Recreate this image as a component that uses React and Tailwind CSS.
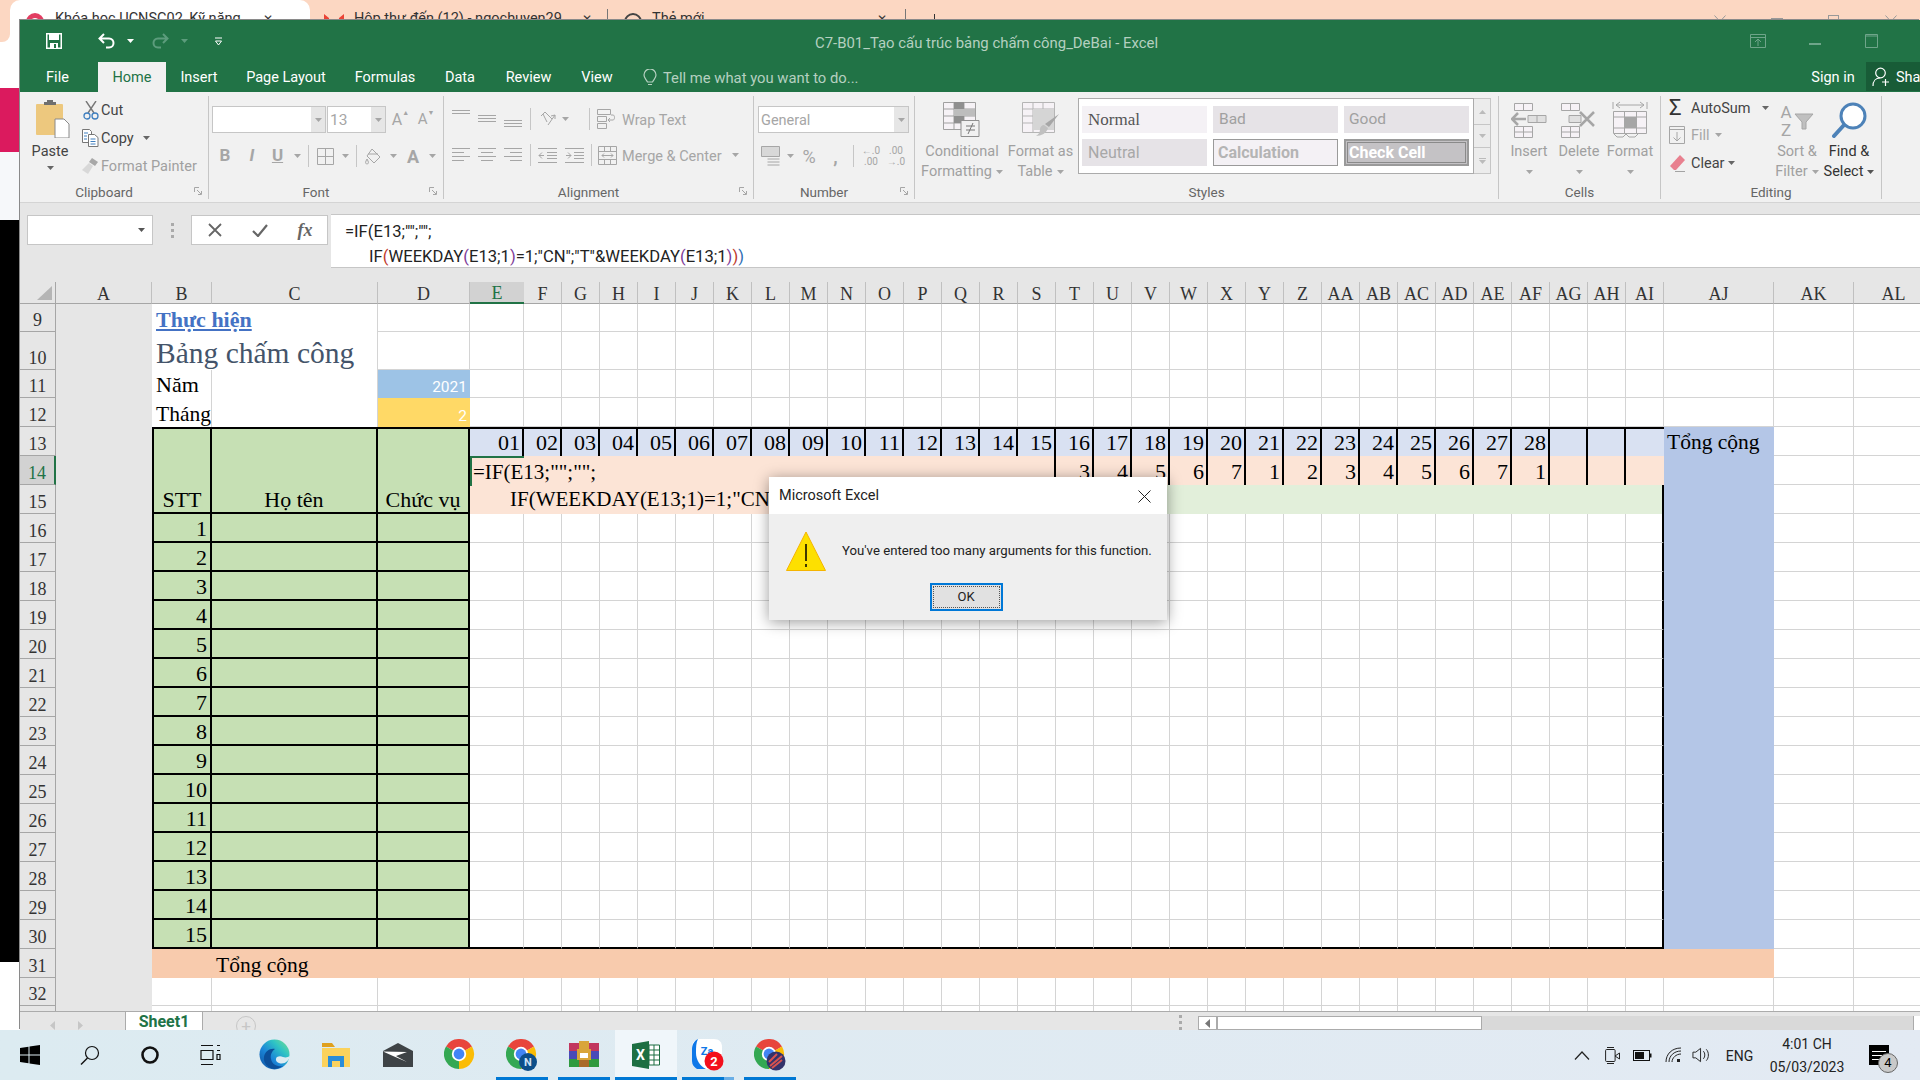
import React from "react";

const P = ({ w, h, d, s = "#a6a6a6", sw = 1, f = "none" }) => (
  <svg width={w} height={h} viewBox={`0 0 ${w} ${h}`} className="shrink-0">
    <path d={d} fill={f} stroke={s} strokeWidth={sw} />
  </svg>
);
const Caret = ({ c = "#a6a6a6" }) => (
  <svg width="7" height="4" viewBox="0 0 7 4" className="shrink-0"><path d="M0 0h7L3.5 4z" fill={c} /></svg>
);
const C = ({ className = "", children }) => (
  <div className={"flex items-center justify-center shrink-0 " + className}>{children}</div>
);
const Sep = () => <div className="w-px h-[22px] bg-[#c6c6c6]" />;
const Launcher = () => (
  <svg width="8" height="8" viewBox="0 0 8 8" className="absolute right-[6px] top-[3px]">
    <path d="M.5 5V.5H5M3 3l4 4M4 7.5h3.5V4" fill="none" stroke="#a6a6a6" />
  </svg>
);
const Group = ({ className = "", label, launcher, children }) => (
  <div className={"mt-[4px] h-[103px] border-r border-[#c6c6c6] flex flex-col shrink-0 " + className}>
    <div className="h-[90px] flex">{children}</div>
    <div className={"relative h-[15px] pt-[1px] leading-[14px] text-center text-[13.5px] text-[#666] " + (launcher ? "pr-[20px]" : "")}>
      {label}
      {launcher && <Launcher />}
    </div>
  </div>
);
const Big = ({ className = "", icon, a, b, caret, color = "text-[#a0a0a0]", carC }) => (
  <div className={"flex flex-col items-center pt-[5px] shrink-0 text-[14.5px] leading-[20px] " + color + " " + className}>
    <div className="h-[37px] flex items-center justify-center">{icon}</div>
    <div className="mt-[4px] whitespace-nowrap">{a}</div>
    <div className="whitespace-nowrap h-[20px] flex items-center gap-[4px]">
      {b}
      {caret && <Caret c={carC} />}
    </div>
  </div>
);

const grid = "border-r border-b border-[#d4d4d4]";
const range = (n) => Array.from({ length: n }, (_, i) => i);
const colNames = ["F","G","H","I","J","K","L","M","N","O","P","Q","R","S","T","U","V","W","X","Y","Z","AA","AB","AC","AD","AE","AF","AG","AH","AI"];
const w14 = { 15: 3, 16: 4, 17: 5, 18: 6, 19: 7, 20: 1, 21: 2, 22: 3, 23: 4, 24: 5, 25: 6, 26: 7, 27: 1 };
const Rh = ({ n, sel }) => (
  <div className={"flex items-end justify-center leading-[22px] text-[18px] border-b " + (sel ? "bg-[#d2d2d2] text-[#217346] border-r-2 border-r-[#217346] border-b-[#a6a6a6]" : "bg-[#e6e6e6] text-[#333] border-r border-[#a6a6a6]")}>{n}</div>
);

function Sheet() {
  const cells = [];
  const push = (el) => cells.push(React.cloneElement(el, { key: cells.length }));
  push(
    <div className="bg-[#e6e6e6] border-r border-b border-[#a6a6a6] flex items-end justify-end pr-[3px] pb-[3px]">
      <svg width="15" height="14" viewBox="0 0 15 14"><path d="M15 0v14H0z" fill="#b5b5b5" /></svg>
    </div>
  );
  const hd = "flex items-center justify-center pt-[2px] text-[18px] leading-none text-[#333] bg-[#e6e6e6] border-r border-b border-r-[#c0c0c0] border-b-[#a6a6a6]";
  ["A", "B", "C", "D"].forEach((c) => push(<div className={hd}>{c}</div>));
  push(<div className="flex items-center justify-center pt-[2px] text-[18px] leading-none text-[#217346] bg-[#d2d2d2] border-b-2 border-[#217346]">E</div>);
  [...colNames, "AJ", "AK", "AL"].forEach((c) => push(<div className={hd}>{c}</div>));

  // rows 9-12
  push(<Rh n={9} />);
  push(<div className="row-span-25 bg-[#e6e6e6]" />);
  push(
    <div className="col-span-2 border-r border-[#d4d4d4] flex items-end pl-[4px] leading-[24px] text-[22px] font-bold text-[#4472c4] underline decoration-2 underline-offset-2 whitespace-nowrap">Thực hiện</div>
  );
  range(35).forEach(() => push(<div className={grid} />));
  push(<Rh n={10} />);
  push(<div className="col-span-2 border-r border-[#d4d4d4] flex items-end pl-[4px] leading-[34px] text-[29.5px] text-[#44546a] whitespace-nowrap">Bảng chấm công</div>);
  range(35).forEach(() => push(<div className={grid} />));
  push(<Rh n={11} />);
  push(<div className="border-r border-[#d4d4d4] flex items-end pl-[4px] leading-[26px] text-[22px] text-black">Năm</div>);
  push(<div className="border-r border-[#d4d4d4]" />);
  push(<div className="bg-[#9dc3e6] flex items-end justify-end pr-[3px] leading-[22px] text-[15.5px] text-white [font-family:Roboto,sans-serif]">2021</div>);
  range(34).forEach(() => push(<div className={grid} />));
  push(<Rh n={12} />);
  push(<div className="border-r border-[#d4d4d4] flex items-end pl-[4px] leading-[26px] text-[21.5px] text-black">Tháng</div>);
  push(<div className="border-r border-[#d4d4d4]" />);
  push(<div className="bg-[#ffd966] flex items-end justify-end pr-[3px] leading-[22px] text-[15.5px] text-white [font-family:Roboto,sans-serif]">2</div>);
  range(34).forEach(() => push(<div className={grid} />));

  // row 13
  push(<Rh n={13} />);
  const merged = "row-span-3 bg-[#c6e0b4] flex items-end justify-center leading-[24px] text-[22px] text-black whitespace-nowrap border-t-2 border-b-2 border-r-2 border-black";
  push(<div className={merged + " border-l-2"}>STT</div>);
  push(<div className={merged}>Họ tên</div>);
  push(<div className={merged}>Chức vụ</div>);
  range(31).forEach((i) =>
    push(
      <div className={"bg-[#d9e1f2] border-t-2 border-black flex items-end justify-end pr-[2px] leading-[26px] text-[22px] text-black " + (i < 30 ? "border-r-2" : "")}>
        {i < 28 ? String(i + 1).padStart(2, "0") : ""}
      </div>
    )
  );
  push(<div className="row-span-18 bg-[#b4c6e7] pl-[3px] pt-[2px] leading-[26px] text-[21.5px] text-black whitespace-nowrap">Tổng cộng</div>);
  push(<div className={grid} />);
  push(<div className={grid} />);

  // row 14
  push(<Rh n={14} sel />);
  push(
    <div className="col-span-15 relative bg-[#fce4d6] border-r-2 border-black">
      <div className="absolute left-0 top-0 right-0 h-[58px] z-10 bg-[#fce4d6] overflow-hidden pl-[3px] pt-[3px] leading-[27px] text-[21px] text-black whitespace-nowrap">
        <div className="absolute left-0 top-0 w-[54px] h-[2px] bg-[#217346]" />
        <div className="absolute left-0 top-0 w-[2px] h-[30px] bg-[#217346]" />
        <div>=IF(E13;"";"";</div>
        <div className="pl-[37px]">IF(WEEKDAY(E13;1)=1;"CN";"T"&amp;WEEKDAY(E13;1)))</div>
      </div>
    </div>
  );
  range(16).forEach((j) => {
    const i = j + 15;
    push(
      <div className={"bg-[#fce4d6] border-black flex items-end justify-end pr-[2px] leading-[26px] text-[22px] text-black " + (i < 30 ? "border-r-2" : "")}>
        {w14[i] ?? ""}
      </div>
    );
  });
  push(<div className={grid} />);
  push(<div className={grid} />);

  // row 15
  push(<Rh n={15} />);
  push(<div className="col-span-31 bg-[#e2efda] border-r-2 border-black" />);
  push(<div className={grid} />);
  push(<div className={grid} />);

  // rows 16-30
  range(15).forEach((k) => {
    push(<Rh n={16 + k} />);
    push(<div className="bg-[#c6e0b4] border-l-2 border-r-2 border-b-2 border-black flex items-end justify-end pr-[3px] leading-[24px] text-[22px] text-black">{k + 1}</div>);
    push(<div className="bg-[#c6e0b4] border-r-2 border-b-2 border-black" />);
    push(<div className="bg-[#c6e0b4] border-r-2 border-b-2 border-black" />);
    range(31).forEach((i) => {
      const bottom = k === 14 ? "border-b-2 border-b-black" : "border-b border-b-[#d4d4d4]";
      const right = i === 30 ? "border-r-2 border-r-black" : "border-r border-r-[#d4d4d4]";
      push(<div className={bottom + " " + right} />);
    });
    push(<div className={grid} />);
    push(<div className={grid} />);
  });

  // row 31
  push(<Rh n={31} />);
  push(<div className="col-span-35 bg-[#f8cbad] flex items-end pl-[64px] leading-[26px] text-[21.5px] text-black whitespace-nowrap">Tổng cộng</div>);
  push(<div className={grid} />);
  push(<div className={grid} />);
  // row 32
  push(<Rh n={32} />);
  range(37).forEach(() => push(<div className={grid} />));
  // row 33
  push(<div className="bg-[#e6e6e6] border-r border-[#a6a6a6]" />);
  range(37).forEach(() => push(<div className="border-r border-[#d4d4d4]" />));

  return (
    <div className="relative h-[729px] shrink-0 overflow-hidden grid grid-cols-[36px_96px_60px_166px_92px_54px_repeat(30,38px)_110px_80px_80px] grid-rows-[22px_28px_38px_28px_29px_29px_29px_29px_repeat(15,29px)_29px_28px_5px] bg-white [font-family:'Liberation_Serif',serif]">
      {cells}
    </div>
  );
}

const ChromeLogo = ({ badge }) => (
  <svg width="32" height="32" viewBox="0 0 32 32">
    <path d="M15 15L2 7.5A15 15 0 0 1 28 7.5Z" fill="#e8453c" />
    <path d="M15 15L28 7.5A15 15 0 0 1 15 30Z" fill="#fbbc05" />
    <path d="M15 15L15 30A15 15 0 0 1 2 7.5Z" fill="#34a853" />
    <circle cx="15" cy="15" r="7.2" fill="#fff" />
    <circle cx="15" cy="15" r="5.4" fill="#4285f4" />
    {badge}
  </svg>
);

const TBCell = ({ bar, active, light, children }) => (
  <div className={"w-[62px] h-full flex flex-col items-center shrink-0 " + (active ? "bg-[#f0f6fa]" : "")}>
    <div className="flex-1 flex items-center justify-center pt-[2px]">{children}</div>
    <div className={"h-[3px] flex " + (active ? "w-[62px] bg-[#0078d4]" : bar ? "w-[52px] bg-[#0078d4] justify-end" : "w-[52px]")}>
      {light && <div className="w-[10px] bg-[#6aaee6]" />}
    </div>
  </div>
);

function Taskbar() {
  return (
    <div className="h-[50px] shrink-0 flex items-stretch bg-gradient-to-r from-[#dcebf1] to-[#e3eaf3] [font-family:Roboto,sans-serif] text-[#222]">
      <C className="w-[60px]">
        <svg width="20" height="20" viewBox="0 0 20 20"><path d="M0 3l8.5-1.2v7.6H0zM9.5 1.6L20 0v9.4H9.5zM0 10.5h8.5v7.7L0 17zM9.5 10.5H20V20L9.5 18.4z" fill="#000" /></svg>
      </C>
      <C className="w-[60px]">
        <svg width="20" height="20" viewBox="0 0 20 20"><circle cx="12" cy="8" r="6.5" fill="none" stroke="#111" strokeWidth="1.2" /><path d="M7.5 13L1 19.5" stroke="#111" strokeWidth="1.4" /></svg>
      </C>
      <C className="w-[60px]">
        <svg width="20" height="20" viewBox="0 0 20 20"><circle cx="10" cy="10" r="7.5" fill="none" stroke="#111" strokeWidth="2.6" /></svg>
      </C>
      <C className="w-[60px]">
        <svg width="21" height="20" viewBox="0 0 21 20"><path d="M1 .5h12M1 19.5h12M1 5.5h12v9H1zM17 .5h3M17 5.5h3M17 9.5h3v5h-3z" fill="none" stroke="#111" strokeWidth="1.2" /></svg>
      </C>
      <div className="w-[3px] shrink-0" />
      <TBCell>
        <svg width="31" height="31" viewBox="0 0 31 31">
          <defs>
            <linearGradient id="ed" x1="1" y1="0" x2="0" y2="1"><stop offset="0" stopColor="#7fe08a" /><stop offset=".3" stopColor="#2fc4c4" /><stop offset=".6" stopColor="#1b86d8" /><stop offset="1" stopColor="#0d4f9e" /></linearGradient>
          </defs>
          <circle cx="15.5" cy="15.5" r="15" fill="url(#ed)" />
          <path d="M31 17c-1 5-6 9-11 7-3-1-4-4-2-6 2-1 4-1 6 0 3 1 5 0 7-1z" fill="#dcebf1" />
          <path d="M16 10c-5-1-10 2-11 8-1 5 3 11 10 12 3 0 6-1 9-3-5 1-11-1-12-7-1-4 1-8 4-10z" fill="#0b4f9a" />
        </svg>
      </TBCell>
      <TBCell>
        <svg width="28" height="24" viewBox="0 0 28 24">
          <path d="M0 5h28v19H0z" fill="#fbd25c" />
          <path d="M0 0h10l3 4H0z" fill="#dfa01e" />
          <path d="M6 13h16v11h-4v-6h-8v6H6z" fill="#2a8dd8" />
        </svg>
      </TBCell>
      <TBCell>
        <svg width="30" height="24" viewBox="0 0 30 24">
          <path d="M0 8L15 0l15 8v16H0z" fill="#3e4346" />
          <path d="M0 8.500l24 .5-11 4 11 6L10 13z" fill="#fff" />
        </svg>
      </TBCell>
      <TBCell><ChromeLogo /></TBCell>
      <TBCell bar>
        <ChromeLogo badge={<><circle cx="22" cy="23" r="9" fill="#0d4f8a" /><text x="22" y="27" fontSize="11" fontWeight="700" fill="#cfe3f5" textAnchor="middle">N</text></>} />
      </TBCell>
      <TBCell bar>
        <svg width="32" height="27" viewBox="0 0 32 27">
          <rect x="1" y="2" width="30" height="8" fill="#c2365e" />
          <rect x="1" y="10" width="30" height="8" fill="#4a4ab8" />
          <rect x="1" y="18" width="30" height="8" fill="#2f9a3f" />
          <path d="M11 0h10v8h2v11h-2v7H11v-7H9V8h2z" fill="#d9a53a" />
          <rect x="12" y="12" width="8" height="5" fill="#fff" />
          <path d="M11 19h10v7H11z" fill="#a86a28" />
        </svg>
      </TBCell>
      <TBCell bar active>
        <svg width="28" height="28" viewBox="0 0 28 28">
          <path d="M0 3l17-3v28L0 25z" fill="#1d6f42" />
          <path d="M17 4h10.500v20H17z" fill="#fff" stroke="#1d6f42" />
          <path d="M17 9h10.500M17 14h10.500M17 19h10.500M22 4v20" stroke="#1d6f42" />
          <text x="8.500" y="19" fontSize="14" fontWeight="700" fill="#fff" textAnchor="middle">X</text>
        </svg>
      </TBCell>
      <TBCell bar light>
        <svg width="34" height="32" viewBox="0 0 34 32">
          <path d="M9 0h14c5 0 8 3 8 8v14c0 5-3 8-8 8H9c-5 0-8-3-8-8V8c0-5 3-8 8-8z" fill="#fff" />
          <path d="M7 0C3 2 1 6 1 10v12c0 4 2 6 5 8l9 0C9 27 5 21 5 14 5 8 5 4 7 0z" fill="#0f78e8" />
          <text x="16" y="16" fontSize="11" fontWeight="700" fill="#0f78e8" textAnchor="middle">Za</text>
          <circle cx="23" cy="22" r="9.5" fill="#f30f1c" />
          <text x="23" y="27" fontSize="13" fontWeight="700" fill="#fff" textAnchor="middle">2</text>
        </svg>
      </TBCell>
      <TBCell bar>
        <ChromeLogo badge={<><circle cx="22" cy="22" r="9.500" fill="#33336b" /><path d="M16 27l12-10M18 29l10-8M15 23l8-8" stroke="#d9534f" strokeWidth="2" /></>} />
      </TBCell>
      <div className="ml-auto flex items-center pr-[8px] shrink-0">
        <C className="w-[30px]"><P w={16} h={9} d="M1 8.500L8 1l7 7.500" s="#222" sw={1.2} /></C>
        <C className="w-[31px]">
          <svg width="15" height="19" viewBox="0 0 15 19"><path d="M2 1.500h7M2 17.500h7" stroke="#222" /><rect x=".6" y="3.500" width="9.500" height="12" rx="1" fill="none" stroke="#222" /><path d="M10 10l4.500-3v6z" fill="none" stroke="#222" /></svg>
        </C>
        <C className="w-[28px]">
          <svg width="19" height="11" viewBox="0 0 19 11"><rect x=".5" y=".5" width="16" height="10" fill="none" stroke="#111" /><rect x="2" y="2" width="9" height="7" fill="#111" /><rect x="17" y="3.500" width="1.500" height="4" fill="#111" /></svg>
        </C>
        <C className="w-[36px]">
          <svg width="18" height="16" viewBox="0 0 18 16"><path d="M1 15C1 7 7 1 16 1M4 15c0-6 5-11 12-11M7 15c0-4 4-8 9-8" fill="none" stroke="#222" /><rect x="12" y="12" width="3" height="3" fill="#222" /></svg>
        </C>
        <C className="w-[19px]">
          <svg width="20" height="16" viewBox="0 0 20 16"><path d="M1 5h3l5-4v14l-5-4H1z M12 4c2 2 2 6 0 8M15 2c3 3 3 9 0 12" fill="none" stroke="#222" /></svg>
        </C>
        <C className="w-[57px] pt-[2px] text-[14px]">ENG</C>
        <div className="w-[78px] pt-[2px] flex flex-col items-center text-[14px] leading-[23px]">
          <div>4:01 CH</div>
          <div>05/03/2023</div>
        </div>
        <div className="w-[66px] flex justify-center">
          <div className="relative w-[20px] h-[20px] bg-black flex flex-col justify-center gap-[3px] px-[3px]">
            <div className="h-px bg-white" /><div className="h-px bg-white" /><div className="h-px bg-white" />
            <div className="absolute left-[9px] top-[8px] w-[20px] h-[20px] rounded-full bg-[#c9c9c9] border border-[#666] flex items-center justify-center text-[13px] text-black">4</div>
          </div>
        </div>
      </div>
    </div>
  );
}

function Ribbon() {
  const small = "pt-[2px] text-[14.5px] leading-none whitespace-nowrap";
  const small2 = "pt-[4px] text-[14.5px] leading-none whitespace-nowrap";
  const abox = "border border-[#c6c6c6]";
  return (
    <div className="h-[111px] shrink-0 flex bg-[#f1f1f1] border-b border-[#d4d4d4] text-[#444] text-[14.5px]">
      {/* Clipboard */}
      <Group className="w-[189px]" label="Clipboard" launcher>
        <div className="w-[60px] flex flex-col items-center pt-[4px]">
          <svg width="35" height="38" viewBox="0 0 35 38" className="ml-[4px]">
            <rect x="1" y="4" width="27" height="31" rx="1" fill="#edc87e" />
            <path d="M9 5V2h3V0h6v2h3v3z" fill="#6f6f6f" />
            <path d="M20 19h9l5 5v14H20z" fill="#fff" stroke="#8a8a8a" />
          </svg>
          <div className="mt-[5px] leading-[18px] text-[#444]">Paste</div>
          <div className="mt-[5px]"><Caret c="#666" /></div>
        </div>
        <div className="flex flex-col">
          <div className="h-[28px] flex items-center mt-0">
            <C className="w-[21px]">
              <svg width="16" height="19" viewBox="0 0 16 19"><path d="M3 0l8 12M13 0L5 12" stroke="#777" strokeWidth="1.4" /><circle cx="4" cy="15" r="3" fill="none" stroke="#3f7fbf" strokeWidth="1.3" /><circle cx="12" cy="15" r="3" fill="none" stroke="#3f7fbf" strokeWidth="1.3" /></svg>
            </C>
            <span className={small}>Cut</span>
          </div>
          <div className="h-[28px] flex items-center">
            <C className="w-[21px]">
              <svg width="17" height="18" viewBox="0 0 17 18"><path d="M.5.500h7l2 2v11h-9z" fill="#fff" stroke="#777" /><path d="M6.500 5.500h6l3.500 3v9H6.500z" fill="#fff" stroke="#777" /><path d="M2 4h4M2 7h3M2 10h3M8.500 10h5M8.500 12.500h5M8.500 15h5" stroke="#3f7fbf" /></svg>
            </C>
            <span className={small}>Copy</span>
            <span className="ml-[9px]"><Caret c="#666" /></span>
          </div>
          <div className="h-[28px] flex items-center text-[#a0a0a0]">
            <C className="w-[21px]">
              <svg width="17" height="16" viewBox="0 0 17 16"><path d="M10 0l6 4-3 4-6-4z" fill="#a8a8a8" /><path d="M7 5l4 3-5 8-6-4z" fill="#d8d8d8" /></svg>
            </C>
            <span className={small}>Format Painter</span>
          </div>
        </div>
      </Group>

      {/* Font */}
      <Group className="w-[235px]" label="Font" launcher>
        <div className="flex flex-col pt-[10px] text-[#a6a6a6]">
          <div className="h-[27px] flex items-stretch pl-[3px]">
            <div className={"w-[114px] flex bg-white " + abox}>
              <div className="flex-1" />
              <C className="w-[14px] bg-[#e6e6e6]"><Caret /></C>
            </div>
            <div className={"ml-[1px] w-[59px] flex bg-white " + abox}>
              <div className="flex-1 pl-[2px] pt-[2px] flex items-center text-[15.5px]">13</div>
              <C className="w-[14px] bg-[#e6e6e6]"><Caret /></C>
            </div>
            <C className="w-[27px] ml-[1px] text-[16px] relative">A<span className="text-[7px] mb-[12px]">▲</span></C>
            <C className="w-[24px] text-[15px] relative">A<span className="text-[7px] mb-[12px]">▼</span></C>
          </div>
          <div className="h-[26px] mt-[10px] flex items-center pl-[1px]">
            <C className="w-[30px] font-bold text-[17px]">B</C>
            <C className="w-[24px] italic font-bold text-[17px]">I</C>
            <C className="w-[27px] font-bold text-[17px] underline">U</C>
            <C className="w-[12px]"><Caret /></C>
            <C className="w-[10px]"><Sep /></C>
            <C className="w-[24px]"><P w={17} h={17} d="M.5.500h16v16H.500zM8.500.500v16M.5 8.500h16" /></C>
            <C className="w-[16px]"><Caret /></C>
            <C className="w-[6px]"><Sep /></C>
            <C className="w-[28px]"><P w={16} h={17} d="M7 1l8 8-6 6-7-7zM3 6h10M1 13c-1 2 0 3 1 3s2-1 1-3l-1-2z" /></C>
            <C className="w-[12px]"><Caret /></C>
            <C className="w-[28px] text-[18px] font-bold">A</C>
            <C className="w-[10px]"><Caret /></C>
          </div>
        </div>
      </Group>

      {/* Alignment */}
      <Group className="w-[310px]" label="Alignment" launcher>
        <div className="flex flex-col pt-[10px] text-[#a6a6a6]">
          <div className="h-[26px] flex items-center pl-[4px]">
            <C className="w-[26px]"><P w={18} h={18} d="M0 .5h18M0 3.500h18" /></C>
            <C className="w-[26px]"><P w={18} h={18} d="M0 5.500h18M0 8.500h18M0 11.500h18" /></C>
            <C className="w-[26px]"><P w={18} h={18} d="M0 10.500h18M0 13.500h18M0 16.500h18" /></C>
            <C className="w-[8px]"><Sep /></C>
            <C className="w-[27px]"><P w={18} h={18} d="M2 6l4-4 7 7M4 4l4 8M9 15L16 5M16 5l-4 1M16 5v4" /></C>
            <C className="w-[8px]"><Caret /></C>
            <C className="w-[21px] justify-end"><Sep /></C>
            <C className="w-[31px]"><P w={18} h={20} d="M.5.500h13v5H.500zM.5 7.500h9v5h-9zM.5 14.500h9v5h-9zM11 11h5c2 0 2-5 0-5h-2M13 9l-2 2 2 2" /></C>
            <span className={small2 + " ml-[1px]"}>Wrap Text</span>
          </div>
          <div className="h-[26px] mt-[10px] flex items-center pl-[4px]">
            <C className="w-[26px]"><P w={18} h={14} d="M0 .5h18M0 4.500h12M0 8.500h18M0 12.500h12" /></C>
            <C className="w-[26px]"><P w={18} h={14} d="M0 .5h18M3 4.500h12M0 8.500h18M3 12.500h12" /></C>
            <C className="w-[26px]"><P w={18} h={14} d="M0 .5h18M6 4.500h12M0 8.500h18M6 12.500h12" /></C>
            <C className="w-[8px]"><Sep /></C>
            <C className="w-[27px]"><P w={19} h={15} d="M0 .5h19M9 4.500h10M9 7.500h10M9 10.500h10M0 14.500h19M6 7.500H1M4 4.500l-3 3 3 3" /></C>
            <C className="w-[26px]"><P w={19} h={15} d="M0 .5h19M9 4.500h10M9 7.500h10M9 10.500h10M0 14.500h19M1 7.500h5M3 4.500l3 3-3 3" /></C>
            <C className="w-[4px]" />
            <C className="w-px"><Sep /></C>
            <C className="w-[30px]"><P w={19} h={19} d="M.5.500h18v18H.500zM.5 5.500h18M.5 13.500h18M6.500.500v5M12.500.500v5M6.500 13.500v5M12.500 13.500v5M4 9.500h11M6 7.500l-2 2 2 2M13 7.500l2 2-2 2" /></C>
            <span className={small2}>Merge &amp; Center</span>
            <span className="ml-[10px]"><Caret /></span>
          </div>
        </div>
      </Group>

      {/* Number */}
      <Group className="w-[161px]" label="Number" launcher>
        <div className="flex flex-col pt-[10px] text-[#a6a6a6]">
          <div className={"h-[27px] ml-[4px] w-[151px] flex bg-white " + abox}>
            <div className="flex-1 pl-[2px] pt-[2px] flex items-center text-[14.5px]">General</div>
            <C className="w-[14px] bg-[#e6e6e6]"><Caret /></C>
          </div>
          <div className="h-[26px] mt-[10px] flex items-center pl-[4px]">
            <C className="w-[26px]"><P w={20} h={20} d="M.5.500h18v10H.500zM6.500 13h12M6.500 16h12M6.500 19h12" f="#d8d8d8" /></C>
            <C className="w-[12px]"><Caret /></C>
            <C className="w-[26px] text-[18px]">%</C>
            <C className="w-[27px] text-[18px] font-bold">,</C>
            <C className="w-[9px]"><Sep /></C>
            <C className="w-[26px] flex-col text-[10px] leading-[11px]"><span>←.0</span><span>.00</span></C>
            <C className="w-[24px] flex-col text-[10px] leading-[11px]"><span>.00</span><span>→.0</span></C>
          </div>
        </div>
      </Group>

      {/* Styles */}
      <Group className="w-[584px]" label="Styles">
        <Big className="ml-[6px] w-[82px]" a="Conditional" b="Formatting" caret icon={
          <svg width="38" height="36" viewBox="0 0 38 36">
            <path d="M.5.500h32v27H.500zM.5 7h32M.5 14h32M.5 21h32M11 .5v27M21 .5v27" fill="#f6f2f6" stroke="#a0a0a0" />
            <path d="M11 0h10v7H11zM11 14h10v7H11z" fill="#8f8f8f" /><path d="M11 7h21v7H11z" fill="#bdbdbd" />
            <path d="M18 18.500h18v16H18z" fill="#f1f1f1" stroke="#8f8f8f" />
            <path d="M23 24h9M23 28h9M30 21l-5 11" stroke="#777" fill="none" />
          </svg>
        } />
        <Big className="w-[75px]" a="Format as" b="Table" caret icon={
          <svg width="38" height="36" viewBox="0 0 38 36">
            <path d="M.5.500h32v30H.500zM.5 7h32M.5 14h32M.5 21h32M11 .5v30M21 .5v30" fill="#f6f2f6" stroke="#b5b5b5" />
            <path d="M11 7h21v21H11z" fill="#d5d5d5" />
            <path d="M37 12L27 25l-4-3z" fill="#a6a6a6" /><path d="M22 23l4 3c-1 5-7 8-12 8 3-2 4-4 4-7 0-2 2-4 4-4z" fill="#c0c0c0" />
          </svg>
        } />
        <div className="mt-[2px] w-[396px] h-[76px] bg-white border border-[#ababab] pl-[3px] pt-[7px] grid grid-cols-[125px_125px_125px] grid-rows-[27px_27px] gap-[6px] shrink-0">
          <div className="bg-[#f4f1f5] flex items-center pl-[6px] text-[17px] text-[#555] [font-family:'Liberation_Serif',serif]">Normal</div>
          <div className="bg-[#e6e3e7] flex items-center pl-[6px] text-[15.5px] text-[#a0a0a0]">Bad</div>
          <div className="bg-[#e6e3e7] flex items-center pl-[5px] text-[15.5px] text-[#a0a0a0]">Good</div>
          <div className="bg-[#e6e3e7] flex items-center pl-[6px] text-[16px] text-[#a8a8a8]">Neutral</div>
          <div className="bg-[#f4f1f5] border border-[#9a9a9a] flex items-center pl-[4px] text-[16px] font-bold text-[#b4b4b4]">Calculation</div>
          <div className="bg-[#c4c2c5] border-2 border-[#9a9a9a] flex items-center pl-[3px] text-[16px] font-bold text-white outline outline-1 -outline-offset-4 outline-[#8a8a8a]">Check Cell</div>
        </div>
        <div className="mt-[2px] w-[17px] h-[76px] flex flex-col border border-l-0 border-[#c6c6c6] bg-[#ececec] shrink-0 text-[#aaa]">
          <C className="h-[26px] border-b border-[#c6c6c6]"><svg width="7" height="4" viewBox="0 0 7 4"><path d="M0 4h7L3.500 0z" fill="#bbb" /></svg></C>
          <C className="h-[23px] border-b border-[#c6c6c6]"><Caret c="#bbb" /></C>
          <C className="flex-1 flex-col gap-[1px]"><div className="w-[7px] h-px bg-[#bbb]" /><Caret c="#bbb" /></C>
        </div>
      </Group>

      {/* Cells */}
      <Group className="w-[162px]" label="Cells">
        <Big className="ml-[5px] w-[50px]" a="Insert" icon={
          <svg width="36" height="36" viewBox="0 0 36 36">
            <path d="M3.500 1.500h18v7h-18zM12.500 1.500v7M3.500 24.500h18v11h-18zM3.500 30h18M12.500 24.500v11" fill="#f6f2f6" stroke="#a6a6a6" />
            <path d="M17 13.500h18v7H17zM26 13.500v7" fill="#e0e0e0" stroke="#a6a6a6" />
            <path d="M15 17H2M7 11l-6 6 6 6" fill="none" stroke="#a6a6a6" strokeWidth="2.500" />
          </svg>
        } b={<Caret />} />
        <Big className="w-[50px]" a="Delete" icon={
          <svg width="36" height="36" viewBox="0 0 36 36">
            <path d="M.5 1.500h18v7H.500zM9.500 1.500v7M.5 24.500h18v11H.500zM.5 30h18M9.500 24.500v11" fill="#f6f2f6" stroke="#a6a6a6" />
            <path d="M8 13.500h12v7H8z" fill="#e0e0e0" stroke="#a6a6a6" />
            <path d="M19 10l14 14M33 10L19 24" stroke="#a6a6a6" strokeWidth="2.500" />
          </svg>
        } b={<Caret />} />
        <Big className="w-[52px]" a="Format" icon={
          <svg width="36" height="37" viewBox="0 0 36 37">
            <path d="M1 1v7M35 1v7M4 4h28M8 1L4 4l4 3M28 1l4 3-4 3" fill="none" stroke="#a6a6a6" />
            <path d="M1.500 10.500h33v22h-33zM1.500 16h33M1.500 27h33M12.500 10.500v22M24.500 10.500v22" fill="#f6f2f6" stroke="#a6a6a6" />
            <path d="M12.500 16h12v11h-12z" fill="#a6a6a6" />
            <path d="M2 33l3 3h6l3-3M14 33l3 3h6l3-3" fill="none" stroke="#a6a6a6" />
          </svg>
        } b={<Caret />} />
      </Group>

      {/* Editing */}
      <Group className="w-[221px]" label="Editing">
        <div className="ml-[8px] w-[102px] flex flex-col shrink-0">
          <div className="h-[24px] flex items-center">
            <C className="w-[22px] justify-start text-[22px] leading-none text-[#333]">Σ</C>
            <span className={small}>AutoSum</span>
            <span className="ml-[11px]"><Caret c="#666" /></span>
          </div>
          <div className="h-[30px] flex items-center text-[#a6a6a6]">
            <C className="w-[22px] justify-start"><P w={16} h={18} d="M.5.500h15v17H.500zM.5 3.500h15M8 6v9M4.500 11.500L8 15l3.500-3.500" /></C>
            <span className={small}>Fill</span>
            <span className="ml-[5px]"><Caret /></span>
          </div>
          <div className="h-[26px] flex items-center">
            <C className="w-[22px] justify-start">
              <svg width="17" height="17" viewBox="0 0 17 17"><path d="M11 0l5 5-9 10H5l-4-4z" fill="#e8808f" /><path d="M6 17h10" stroke="#555" /></svg>
            </C>
            <span className={small}>Clear</span>
            <span className="ml-[4px]"><Caret c="#666" /></span>
          </div>
        </div>
        <Big className="w-[52px]" a="Sort &" b="Filter" caret icon={
          <svg width="36" height="34" viewBox="0 0 36 34">
            <text x="7" y="15" fontSize="17" fill="#a6a6a6" textAnchor="middle" fontFamily="Roboto,sans-serif">A</text>
            <text x="7" y="33" fontSize="17" fill="#a6a6a6" textAnchor="middle" fontFamily="Roboto,sans-serif">Z</text>
            <path d="M16 11h18l-7 8v7h-4v-7z" fill="#c0c0c0" stroke="#a6a6a6" />
          </svg>
        } />
        <Big className="w-[52px]" color="text-[#333]" carC="#555" a="Find &" b="Select" caret icon={
          <svg width="36" height="36" viewBox="0 0 36 36">
            <circle cx="22" cy="14" r="12" fill="#fff" stroke="#4d82b8" strokeWidth="3" />
            <path d="M13 23L3 34" stroke="#4d82b8" strokeWidth="4" strokeLinecap="round" />
          </svg>
        } />
      </Group>
      <div className="flex-1" />
    </div>
  );
}

function Dialog() {
  return (
    <div className="absolute left-[769px] top-[477px] z-50 w-[398px] h-[143px] flex flex-col bg-[#efefef] shadow-[0_2px_14px_rgba(0,0,0,0.4)] [font-family:Roboto,sans-serif]">
      <div className="h-[37px] pt-[1px] bg-white flex items-center justify-between pl-[10px] pr-[16px] text-[14.5px] text-[#222]">
        <span>Microsoft Excel</span>
        <P w={13} h={13} d="M.5.500l12 12M12.500.500l-12 12" s="#222" />
      </div>
      <div className="flex items-center pl-[17px] pt-[17px]">
        <svg width="40" height="40" viewBox="0 0 40 40" className="shrink-0">
          <path d="M20 1L39.500 39.500H.500z" fill="#fde000" stroke="#f5b400" />
          <path d="M20 13v17M20 33v3" stroke="#000" strokeWidth="1.500" />
        </svg>
        <span className="ml-[16px] text-[13.2px] text-[#222] whitespace-nowrap">You've entered too many arguments for this function.</span>
      </div>
      <div className="flex justify-center mt-[12px] pr-[4px]">
        <button className="w-[73px] h-[28px] bg-[#e1e1e1] border-2 border-[#0078d7] text-[13px] text-[#222] outline-1 outline-dotted -outline-offset-4 outline-[#555]">OK</button>
      </div>
    </div>
  );
}

export default function App() {
  return (
    <div className="relative w-[1920px] h-[1080px] overflow-hidden flex flex-col bg-white [font-family:Roboto,sans-serif]">
      {/* browser tabs strip behind the window */}
      <div className="h-[20px] shrink-0 bg-[#fcd7c2] flex pl-[10px] overflow-hidden text-[14.5px] text-[#333] leading-[18px]">
        <div className="w-[300px] h-[40px] bg-white rounded-t-[10px] flex items-start pt-[10px] pl-[15px] shrink-0">
          <svg width="20" height="20" viewBox="0 0 20 20" className="shrink-0 mt-[2px]"><circle cx="10" cy="10" r="9" fill="#e23d62" /><circle cx="10" cy="10" r="4" fill="#fff" /></svg>
          <span className="ml-[10px] w-[204px] overflow-hidden whitespace-nowrap">Khóa học UCNSC02_Kỹ năng</span>
          <span className="ml-[4px] text-[12px]">✕</span>
        </div>
        <div className="w-[298px] h-[11px] mt-[9px] flex items-start pt-px pl-[14px] shrink-0 border-r border-[#777]">
          <svg width="20" height="16" viewBox="0 0 20 16" className="shrink-0 mt-[4px]"><path d="M0 0l10 8 10-8v16H0z" fill="#ea4335" /><path d="M5 4l5 4 5-4v12H5z" fill="#fff" /></svg>
          <span className="ml-[10px] w-[218px] overflow-hidden whitespace-nowrap">Hộp thư đến (12) - ngochuyen29</span>
          <span className="ml-[10px] text-[12px]">✕</span>
        </div>
        <div className="w-[298px] h-[11px] mt-[9px] flex items-start pt-px pl-[16px] shrink-0 border-r border-[#777]">
          <svg width="18" height="18" viewBox="0 0 18 18" className="shrink-0 mt-[3px]"><circle cx="9" cy="9" r="8" fill="none" stroke="#444" strokeWidth="2" /></svg>
          <span className="ml-[10px] w-[225px] whitespace-nowrap">Thẻ mới</span>
          <span className="text-[12px]">✕</span>
        </div>
        <div className="ml-[28px] w-px h-[20px] mt-[14px] bg-[#333]" />
        <div className="ml-auto flex items-start pt-[15px] text-[#777] shrink-0">
          <C className="w-[56px]"><P w={12} h={8} d="M.5.500l5.500 6 5.500-6" s="#999" /></C>
          <C className="w-[57px]"><div className="w-[12px] h-px mt-[3px] bg-[#999]" /></C>
          <C className="w-[57px]"><div className="w-[11px] h-[9px] border border-[#999]" /></C>
          <C className="w-[58px]"><P w={12} h={8} d="M.5.500l5.500 6 5.500-6" s="#999" /></C>
        </div>
      </div>

      <div className="flex flex-1 min-h-0">
        {/* what shows of the desktop to the left of the window */}
        <div className="w-[20px] shrink-0 flex flex-col">
          <div className="h-[68px] shrink-0 bg-white">
            <div className="w-[10px] h-[22px] bg-[#fcd7c2] rounded-br-[8px]" />
          </div>
          <div className="h-[64px] shrink-0 bg-[#db1a5e]" />
          <div className="h-[68px] shrink-0 bg-[#f6f8fa]" />
          <div className="h-[742px] shrink-0 bg-black" />
          <div className="flex-1 bg-white" />
        </div>

        {/* Excel window */}
        <div className="flex-1 min-w-0 flex flex-col shadow-[-1px_-1px_0_#8a8a8a] z-10">
          <div className="h-[42px] shrink-0 bg-[#217346] flex items-center pr-[20px] text-white">
            <C className="ml-[25px] w-[18px]">
              <svg width="16" height="16" viewBox="0 0 16 16"><path d="M.75.750h14.500v14.500H.750z" fill="none" stroke="#fff" strokeWidth="1.500" /><path d="M3 1h10v6H3zM4 10h8v6H4z" fill="#fff" /><path d="M8 11h2v4H8z" fill="#217346" /></svg>
            </C>
            <C className="ml-[34px] w-[20px]"><P w={18} h={16} d="M6 1L1.500 5.500 6 10M2 5.500h9c6 0 6 9 0 9H8" s="#fff" sw={2} /></C>
            <C className="ml-[9px] w-[8px]"><Caret c="#fff" /></C>
            <C className="ml-[16px] w-[20px]"><P w={18} h={16} d="M12 1l4.500 4.500L12 10M16 5.500H7c-6 0-6 9 0 9h3" s="#5c9c7c" sw={2} /></C>
            <C className="ml-[10px] w-[8px]"><Caret c="#5c9c7c" /></C>
            <C className="ml-[25px] w-[10px]"><P w={7} h={9} d="M0 1h7M.5 4h6l-3 4z" s="#fff" /></C>
            <span className="ml-[592px] pt-[5px] text-[14.9px] text-[#b5d0c0] whitespace-nowrap">C7-B01_Tạo cấu trúc bảng chấm công_DeBai - Excel</span>
            <div className="ml-auto flex items-center">
              <C className="w-[57px]"><P w={16} h={14} d="M.5.500h15v13H.500zM.5 3.500h15M8 12V6M5 8l3-3 3 3" s="#6fa58a" /></C>
              <C className="w-[57px]"><div className="w-[12px] h-[2px] mt-[6px] bg-[#6fa58a]" /></C>
              <C className="w-[57px]"><P w={13} h={14} d="M.5.500h12v13H.500zM.5 2h12" s="#6fa58a" /></C>
            </div>
          </div>
          <div className="h-[30px] shrink-0 bg-[#217346] flex items-stretch text-[14.5px] text-white">
            <C className="w-[75px] pt-[2px]">File</C>
            <C className="ml-[3px] w-[68px] pt-[2px] bg-[#f1f1f1] text-[#217346]">Home</C>
            <C className="w-[66px] pt-[2px]">Insert</C>
            <C className="w-[108px] pt-[2px]">Page Layout</C>
            <C className="w-[90px] pt-[2px]">Formulas</C>
            <C className="w-[60px] pt-[2px]">Data</C>
            <C className="w-[77px] pt-[2px]">Review</C>
            <C className="w-[60px] pt-[2px]">View</C>
            <div className="ml-[16px] pt-[2px] flex items-center text-[#b5d0c0]">
              <svg width="14" height="18" viewBox="0 0 14 18" className="shrink-0"><path d="M4.500 13C3 10 1 9 1 6a6 6 0 0 1 12 0c0 3-2 4-3.500 7zM5 15.500h4" fill="none" stroke="#b5d0c0" strokeWidth="1.200" /></svg>
              <span className="ml-[6px] whitespace-nowrap text-[14.8px]">Tell me what you want to do...</span>
            </div>
            <C className="ml-auto w-[66px] pt-[2px]">Sign in</C>
            <div className="w-[54px] h-[29px] bg-[#185c37] flex items-center pl-[6px] overflow-hidden">
              <svg width="18" height="20" viewBox="0 0 18 20" className="shrink-0"><circle cx="8.500" cy="6" r="4.800" fill="none" stroke="#fff" strokeWidth="1.200" /><path d="M1 19c0-5 3-8 7-8M10 15h7M13.500 12v7" fill="none" stroke="#fff" strokeWidth="1.200" /></svg>
              <span className="ml-[6px] pt-[2px]">Share</span>
            </div>
          </div>

          <Ribbon />

          {/* formula bar */}
          <div className="h-[79px] shrink-0 bg-[#e6e6e6] pt-[12px] pl-[7px] flex items-start">
            <div className="w-[126px] h-[30px] bg-white border border-[#c6c6c6] flex items-center justify-end pr-[7px] shrink-0"><Caret c="#555" /></div>
            <C className="w-[38px] h-[30px] flex-col gap-[3px]">
              <div className="w-[3px] h-[3px] bg-[#aaa]" /><div className="w-[3px] h-[3px] bg-[#aaa]" /><div className="w-[3px] h-[3px] bg-[#aaa]" />
            </C>
            <div className="w-[137px] h-[30px] bg-white border border-[#c6c6c6] flex items-center shrink-0 text-[#666]">
              <C className="w-[45px]"><P w={14} h={14} d="M1 1l12 12M13 1L1 13" s="#666" sw={1.800} /></C>
              <C className="w-[46px]"><P w={16} h={13} d="M1 7l5 5L15 1" s="#666" sw={2.200} /></C>
              <C className="w-[44px] text-[18px] italic font-bold [font-family:'Liberation_Serif',serif]">fx</C>
            </div>
            <div className="ml-[3px] flex-1 h-[54px] -mt-px bg-white border-y border-[#c6c6c6] pl-[14px] pt-[5px] leading-[24.500px] text-[16.6px] text-[#222] whitespace-nowrap">
              <div>=IF(E13;"";"";</div>
              <div className="pl-[24px]">
                IF<span className="text-[#c0392b]">(</span>WEEKDAY<span className="text-[#7d3c98]">(</span>E13;1<span className="text-[#7d3c98]">)</span>=1;"CN";"T"&amp;WEEKDAY<span className="text-[#7d3c98]">(</span>E13;1<span className="text-[#7d3c98]">)</span><span className="text-[#c0392b]">)</span><span className="text-[#2e6db4]">)</span>
              </div>
            </div>
          </div>

          <Sheet />

          {/* sheet tabs */}
          <div className="h-[19px] shrink-0 bg-[#e6e6e6] border-t border-[#ababab] flex items-start overflow-hidden">
            <C className="ml-[28px] w-[8px] h-[18px] mt-[4px]"><svg width="5" height="9" viewBox="0 0 5 9"><path d="M5 0v9L0 4.500z" fill="#c6c6c6" /></svg></C>
            <C className="ml-[20px] w-[8px] h-[18px] mt-[4px]"><svg width="5" height="9" viewBox="0 0 5 9"><path d="M0 0v9l5-4.500z" fill="#c6c6c6" /></svg></C>
            <div className="ml-[41px] w-[78px] h-[18px] bg-white border-x border-[#ababab] flex items-start justify-center leading-[20px] text-[16px] font-bold text-[#217346] shrink-0">Sheet1</div>
            <div className="ml-[33px] mt-[4px] w-[20px] h-[20px] rounded-full border border-[#c6c6c6] flex items-center justify-center text-[#c6c6c6] text-[17px] leading-none shrink-0">+</div>
            <div className="ml-[923px] mt-[3px] w-[3px] flex flex-col gap-[3px] shrink-0">
              <div className="h-[3px] bg-[#aaa]" /><div className="h-[3px] bg-[#aaa]" /><div className="h-[3px] bg-[#aaa]" />
            </div>
            <div className="ml-[16px] mt-[4px] flex-1 h-[14px] flex">
              <C className="w-[19px] bg-white border border-[#ababab]"><svg width="5" height="9" viewBox="0 0 5 9"><path d="M5 0v9L0 4.500z" fill="#777" /></svg></C>
              <div className="w-[265px] bg-white border border-[#ababab]" />
              <div className="flex-1 bg-[#d9d9d9]" />
              <div className="w-[7px] bg-white border-l border-[#ababab]" />
            </div>
          </div>
        </div>
      </div>

      <Taskbar />
      <Dialog />
    </div>
  );
}
